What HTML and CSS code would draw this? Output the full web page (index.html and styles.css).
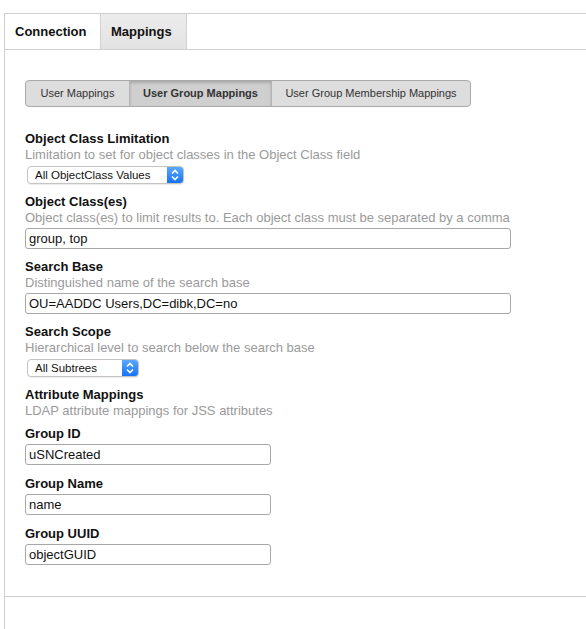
FILE: index.html
```html
<!DOCTYPE html>
<html>
<head>
<meta charset="utf-8">
<link rel="stylesheet" href="styles.css">
</head>
<body>
<div class="panel">
  <div class="tabs">
    <div class="tab tab-connection">Connection</div>
    <div class="tab tab-active">Mappings</div>
  </div>
  <div class="content">
    <div class="segmented">
      <div class="seg seg-1">User Mappings</div>
      <div class="seg seg-2 seg-on">User Group Mappings</div>
      <div class="seg seg-3">User Group Membership Mappings</div>
    </div>

    <div class="field first">
      <div class="label">Object Class Limitation</div>
      <div class="desc">Limitation to set for object classes in the Object Class field</div>
      <div class="select select-wide">
        <span class="select-text">All ObjectClass Values</span>
        <span class="select-arrow"><svg width="16" height="18" viewBox="0 0 16 18"><path d="M5 7.5 L8 4.5 L11 7.5 M5 10.5 L8 13.5 L11 10.5" fill="none" stroke="#fff" stroke-width="1.6"/></svg></span>
      </div>
    </div>

    <div class="field">
      <div class="label">Object Class(es)</div>
      <div class="desc">Object class(es) to limit results to. Each object class must be separated by a comma</div>
      <div class="input input-wide">group, top</div>
    </div>

    <div class="field">
      <div class="label">Search Base</div>
      <div class="desc">Distinguished name of the search base</div>
      <div class="input input-wide">OU=AADDC Users,DC=dibk,DC=no</div>
    </div>

    <div class="field">
      <div class="label">Search Scope</div>
      <div class="desc">Hierarchical level to search below the search base</div>
      <div class="select select-narrow">
        <span class="select-text">All Subtrees</span>
        <span class="select-arrow"><svg width="16" height="18" viewBox="0 0 16 18"><path d="M5 7.5 L8 4.5 L11 7.5 M5 10.5 L8 13.5 L11 10.5" fill="none" stroke="#fff" stroke-width="1.6"/></svg></span>
      </div>
    </div>

    <div class="field attr">
      <div class="label">Attribute Mappings</div>
      <div class="desc">LDAP attribute mappings for JSS attributes</div>
    </div>

    <div class="field sub">
      <div class="label">Group ID</div>
      <div class="input input-small">uSNCreated</div>
    </div>
    <div class="field sub">
      <div class="label">Group Name</div>
      <div class="input input-small">name</div>
    </div>
    <div class="field sub">
      <div class="label">Group UUID</div>
      <div class="input input-small">objectGUID</div>
    </div>
  </div>
  <div class="footer"></div>
</div>
</body>
</html>
```
FILE: styles.css
```css
html, body {
  margin: 0;
  padding: 0;
  background: #fff;
}
body {
  font-family: "Liberation Sans", Arial, sans-serif;
  color: #111;
}
.panel {
  margin: 13px 0 0 4px;
  border-top: 1px solid #cfcfcf;
  border-left: 1px solid #cfcfcf;
  height: 615px;
  display: flex;
  flex-direction: column;
}
.tabs {
  display: flex;
  height: 35px;
  border-bottom: 1px solid #cfcfcf;
}
.tab {
  font-weight: bold;
  font-size: 13px;
  line-height: 35px;
  box-sizing: border-box;
  color: #111;
}
.tab-connection {
  width: 95px;
  padding-left: 10px;
}
.tab-active {
  width: 87px;
  padding-left: 10px;
  background: linear-gradient(#ececec, #e3e3e3);
  border-left: 1px solid #d2d2d2;
  border-right: 1px solid #d2d2d2;
}
.content {
  padding: 30px 20px 0 20px;
  height: 546px;
  box-sizing: border-box;
}
.footer {
  border-top: 1px solid #cfcfcf;
  flex: 1;
}
.segmented {
  display: flex;
  height: 27px;
  width: 446px;
  box-sizing: border-box;
  border: 1px solid #a9a9a9;
  border-radius: 4px;
  background: #dddddd;
  overflow: hidden;
}
.seg {
  font-size: 11px;
  color: #333;
  line-height: 25px;
  text-align: center;
  box-sizing: border-box;
}
.seg-1 { width: 103px; }
.seg-2 {
  width: 143px;
  border-left: 1px solid #b4b4b4;
  border-right: 1px solid #b4b4b4;
  font-weight: bold;
}
.seg-3 { flex: 1; }
.seg-on {
  background: #cfcfcf;
  box-shadow: inset 0 2px 3px rgba(0,0,0,0.18);
}
.field {
  margin-top: 10px;
}
.field.first {
  margin-top: 24px;
}
.label {
  font-weight: bold;
  font-size: 13px;
  line-height: 16px;
  color: #111;
}
.desc {
  font-size: 13px;
  line-height: 16px;
  color: #9a9a9a;
}
.input {
  margin-top: 2px;
  height: 21px;
  box-sizing: border-box;
  border: 1px solid #a8a8a8;
  border-radius: 3px;
  font-size: 13px;
  line-height: 19px;
  padding-left: 3px;
  color: #111;
  background: #fff;
}
.input-wide { width: 486px; }
.input-small { width: 246px; }
.select {
  margin-top: 3px;
  margin-left: 2px;
  height: 18px;
  box-sizing: border-box;
  border: 1px solid #c4c4c4;
  border-radius: 4px;
  display: flex;
  align-items: stretch;
  background: #fff;
  box-shadow: 0 1px 1px rgba(0,0,0,0.08);
  overflow: hidden;
}
.select-wide { width: 157px; }
.select-narrow { width: 112px; }
.select-text {
  flex: 1;
  font-size: 11.5px;
  line-height: 16px;
  padding-left: 7px;
  color: #111;
}
.select-arrow {
  width: 16px;
  background: linear-gradient(#5aa8ff, #1673f5);
  display: flex;
  align-items: center;
  justify-content: center;
}
.select-arrow svg { display: block; }
.attr { margin-top: 10px; }
.sub { margin-top: 7px; }
.sub + .sub { margin-top: 11px; }
```
